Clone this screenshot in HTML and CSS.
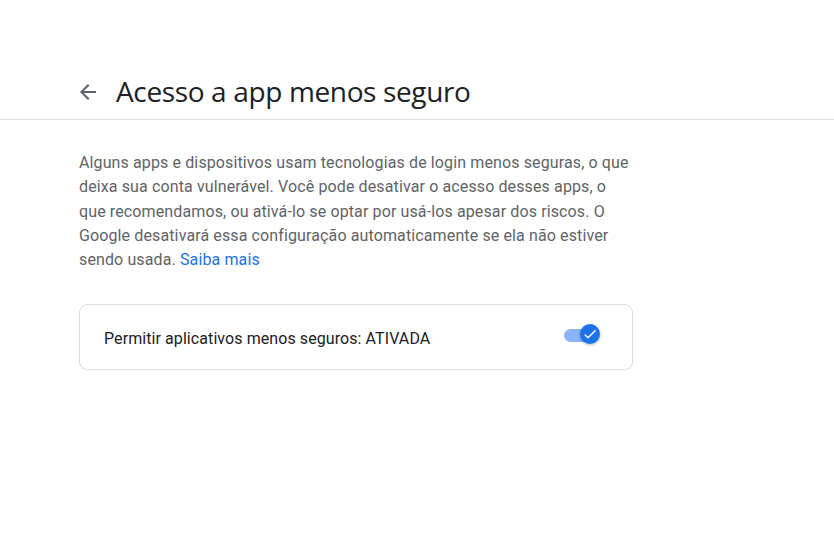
FILE: index.html
```html
<!DOCTYPE html>
<html lang="pt-BR">
<head>
<meta charset="utf-8">
<title>Acesso a app menos seguro</title>
<link rel="stylesheet" href="styles.css">
</head>
<body>
<header class="header">
  <div class="header-inner">
    <button class="back" aria-label="Voltar">
      <svg width="24" height="24" viewBox="0 0 24 24"><path d="M20 11H7.83l5.59-5.59L12 4l-8 8 8 8 1.41-1.41L7.83 13H20v-2z" fill="#5f6368"/></svg>
    </button>
    <h1 class="title">Acesso a app menos seguro</h1>
  </div>
</header>
<main class="main">
  <p class="desc">Alguns apps e dispositivos usam tecnologias de login menos seguras, o que deixa sua conta vulnerável. Você pode desativar o acesso desses apps, o que recomendamos, ou ativá-lo se optar por usá-los apesar dos riscos. O Google desativará essa configuração automaticamente se ela não estiver sendo usada. <a href="#" class="link">Saiba mais</a></p>
  <div class="card">
    <span class="card-label">Permitir aplicativos menos seguros: ATIVADA</span>
    <span class="toggle" role="switch" aria-checked="true">
      <span class="track"></span>
      <span class="thumb">
        <svg width="16" height="16" viewBox="0 0 24 24"><path d="M9 16.17L4.83 12l-1.42 1.41L9 19 21 7l-1.41-1.41z" fill="#fff"/></svg>
      </span>
    </span>
  </div>
</main>
</body>
</html>
```
FILE: styles.css
```css
* { box-sizing: border-box; }
body {
  margin: 0;
  background: #fff;
  font-family: Roboto, "Liberation Sans", Arial, sans-serif;
  color: #202124;
}
.header {
  border-bottom: 1px solid #dadce0;
  padding-top: 69px;
  height: 120px;
}
.header-inner {
  display: flex;
  align-items: center;
  padding-left: 76px;
  height: 44px;
}
.back {
  width: 24px;
  height: 24px;
  padding: 0;
  border: 0;
  background: none;
  display: flex;
  align-items: center;
  justify-content: center;
  margin-right: 16px;
  margin-top: 2px;
}
.title {
  margin: 0;
  font-family: "Open Sans", Roboto, sans-serif;
  font-weight: 400;
  font-size: 28px;
  letter-spacing: -0.36px;
  color: #202124;
}
.main {
  padding-left: 79px;
  box-sizing: content-box;
  width: 554px;
}
.desc {
  margin: 31px 0 0;
  font-size: 16px;
  line-height: 24.25px;
  letter-spacing: 0.12px;
  color: #5f6368;
}
.link {
  color: #1a73e8;
  text-decoration: none;
}
.card {
  margin-top: 32px;
  height: 66px;
  border: 1px solid #dadce0;
  border-radius: 8px;
  display: flex;
  align-items: center;
  justify-content: space-between;
  padding: 2px 32px 0 24px;
}
.card-label {
  font-size: 16px;
  letter-spacing: 0.08px;
  color: #202124;
}
.toggle {
  position: relative;
  width: 36px;
  height: 20px;
  display: inline-block;
  margin-top: -6px;
}
.track {
  position: absolute;
  left: 0;
  top: 4px;
  width: 34px;
  height: 13px;
  border-radius: 7px;
  background: #8ab4f8;
}
.thumb {
  position: absolute;
  right: 0;
  top: -1px;
  width: 20px;
  height: 20px;
  border-radius: 50%;
  background: #1a73e8;
  box-shadow: 0 1px 3px rgba(60,64,67,0.4);
  display: flex;
  align-items: center;
  justify-content: center;
}
```
